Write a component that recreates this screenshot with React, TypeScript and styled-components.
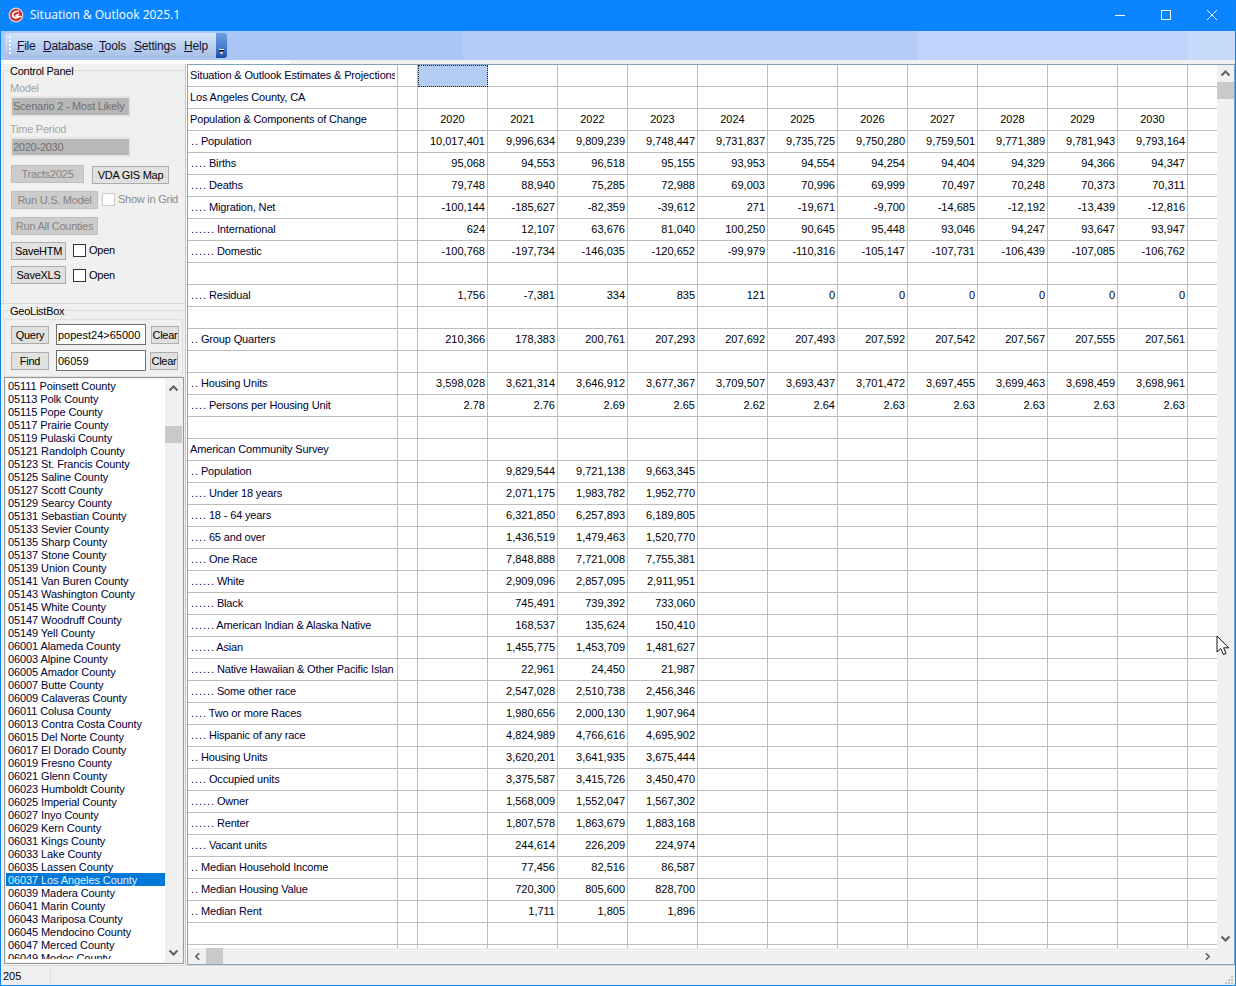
import React from "react";
import styled, { createGlobalStyle } from "styled-components";

const Global = createGlobalStyle`
  html, body { margin: 0; padding: 0; background: #f0f0f0; overflow: hidden; }
  * { box-sizing: border-box; }
`;

const FONT = `"Liberation Sans", Arial, sans-serif`;

const Win = styled.div`
  position: relative;
  width: 1236px;
  height: 986px;
  display: flex;
  flex-direction: column;
  background: #f0f0f0;
  border: 1px solid #0a84e8;
  border-top: 0;
  font: 11px/13px ${FONT};
  color: #000;
  overflow: hidden;
`;

const TitleBar = styled.div`
  height: 31px;
  margin: 0 -1px;
  padding-right: 1px;
  flex: none;
  background: #0a85ff;
  display: flex;
  align-items: center;
  color: #fff;
  font: 12px/16px "Open Sans", sans-serif;
`;
const AppIcon = styled.svg`
  width: 16px;
  height: 16px;
  margin: 0 6px 2px 8px;
`;
const Title = styled.div`
  flex: 1;
  margin-bottom: 1px;
`;
const WinBtn = styled.svg`
  width: 46px;
  height: 31px;
`;

const Band = styled.div`
  height: 29px;
  flex: none;
  display: flex;
  align-items: flex-start;
  padding: 2px 0 0 4px;
  background: linear-gradient(
    90deg,
    #a9c6f5 0,
    #a9c6f5 462px,
    #b5cdf6 462px,
    #b5cdf6 917px,
    #c0d3fa 917px,
    #c0d3fa 1187px,
    #c6daf9 1187px
  );
`;
const MenuBar = styled.div`
  height: 25px;
  width: 211px;
  border-radius: 4px 0 0 4px;
  background: linear-gradient(180deg, #d3e3fa 0, #bdd2f1 50%, #a5bee6 100%);
  display: flex;
  align-items: center;
  font: 12px/16px ${FONT};
  letter-spacing: -0.2px;
  position: relative;
`;
const Grip = styled.div`
  width: 2px;
  height: 20px;
  margin: 0 6px 0 4px;
  background: repeating-linear-gradient(180deg, #ffffff 0 2px, transparent 2px 4px);
`;
const MenuItem = styled.span<{ $w: number }>`
  width: ${(p) => p.$w}px;
  flex: none;
  color: #101030;
`;
const Mn = styled.span`
  text-decoration: underline;
`;
const Chevron = styled.div`
  width: 12px;
  height: 25px;
  margin-left: -1px;
  border-radius: 0 3px 3px 0;
  background: linear-gradient(180deg, #6f9de0 0, #4a7fd0 55%, #1a4ba8 100%);
  display: flex;
  align-items: flex-end;
  justify-content: center;
  padding-bottom: 2px;
`;
const Strip = styled.div`
  height: 4px;
  flex: none;
  background: linear-gradient(90deg, #ffffff 0, #ffffff 289px, #f0f0f0 289px);
`;

const Main = styled.div`
  flex: 1;
  min-height: 0;
  display: flex;
`;

const Left = styled.div`
  width: 185px;
  flex: none;
  display: flex;
  flex-direction: column;
  border-right: 1px solid #c4c4c4;
  letter-spacing: -0.25px;
`;
const ControlGroup = styled.div`
  height: 233px;
  margin: 6px 0 0 2px;
  border-top: 1px solid #dcdcdc;
  border-left: 1px solid #dcdcdc;
  padding: 0 0 0 6px;
`;
const Legend = styled.div`
  height: 14px;
  margin: -7px 0 0 0;
  width: fit-content;
  background: #f0f0f0;
  line-height: 14px;
`;
const DimLabel = styled.div<{ $top: number }>`
  height: 14px;
  margin-top: ${(p) => p.$top}px;
  line-height: 14px;
  color: #a3a3a3;
`;
const ReadOnly = styled.div<{ $h: number }>`
  width: 121px;
  height: ${(p) => p.$h}px;
  margin-top: 1px;
  border: 2px solid #e6e6e6;
  background: #b8b8b8;
  color: #6e6e6e;
  padding-left: 1px;
  display: flex;
  align-items: center;
  white-space: nowrap;
  overflow: hidden;
`;
const BtnRow = styled.div<{ $top: number }>`
  display: flex;
  align-items: flex-start;
  margin-top: ${(p) => p.$top}px;
  height: 18px;
`;
const Btn = styled.div<{ $w: number; $off?: boolean; $ml?: number; $mt?: number }>`
  width: ${(p) => p.$w}px;
  height: 18px;
  flex: none;
  margin-left: ${(p) => p.$ml ?? 0}px;
  margin-top: ${(p) => p.$mt ?? 0}px;
  border: 1px solid ${(p) => (p.$off ? "#bfbfbf" : "#adadad")};
  background: ${(p) => (p.$off ? "#cccccc" : "#e1e1e1")};
  color: ${(p) => (p.$off ? "#838383" : "#000")};
  display: flex;
  align-items: center;
  justify-content: center;
  white-space: nowrap;
`;
const Check = styled.div<{ $off?: boolean; $ml: number; $mt: number }>`
  width: 13px;
  height: 13px;
  flex: none;
  margin-left: ${(p) => p.$ml}px;
  margin-top: ${(p) => p.$mt}px;
  background: #fff;
  border: 1px solid ${(p) => (p.$off ? "#cccccc" : "#333333")};
`;
const CheckText = styled.span<{ $off?: boolean; $mt: number }>`
  margin-left: 3px;
  margin-top: ${(p) => p.$mt}px;
  color: ${(p) => (p.$off ? "#8a8a8a" : "#000")};
  white-space: nowrap;
`;

const GeoHead = styled.div`
  height: 9px;
  margin: 6px 0 0 2px;
  border-top: 1px solid #dcdcdc;
  border-left: 1px solid #dcdcdc;
  padding-left: 6px;
`;
const TopRule = styled.div`
  height: 1px;
  background: #d8d8d8;
`;
const QueryPanel = styled.div`
  height: 58px;
  margin: 0 2px 0 3px;
  border: 1px solid #dedede;
  padding: 4px 0 0 6px;
  display: flex;
  flex-direction: column;
  gap: 5px;
`;
const QueryRow = styled.div`
  display: flex;
  align-items: flex-start;
  height: 21px;
`;
const Input = styled.div`
  width: 90px;
  height: 21px;
  flex: none;
  margin-left: 7px;
  border: 1px solid #6f6f6f;
  background: #fff;
  padding-left: 1px;
  display: flex;
  align-items: center;
  white-space: nowrap;
  overflow: hidden;
  line-height: 14px;
  letter-spacing: 0;
`;
const ListBox = styled.div`
  flex: 1;
  min-height: 0;
  margin: 0 0 0 3px;
  width: 180px;
  border: 1px solid #9a9a9a;
  box-shadow: inset 0 0 0 1px #ededed;
  padding: 1px;
  display: flex;
  background: #fff;
  letter-spacing: -0.1px;
`;
const ListItems = styled.div`
  flex: 1;
  overflow: hidden;
  margin-bottom: 3px;
`;
const ListItem = styled.div<{ $sel?: boolean }>`
  height: 13px;
  line-height: 15px;
  padding-left: 2px;
  white-space: nowrap;
  color: ${(p) => (p.$sel ? "#dfeeff" : "#000033")};
  background: ${(p) => (p.$sel ? "#0078d7" : "transparent")};
`;
const VBar = styled.div<{ $w: number; $pb?: number }>`
  width: ${(p) => p.$w}px;
  flex: none;
  background: #f0f0f0;
  display: flex;
  flex-direction: column;
  align-items: center;
  padding-bottom: ${(p) => p.$pb ?? 0}px;
`;
const VThumb = styled.div<{ $top: number; $h: number }>`
  width: 100%;
  height: ${(p) => p.$h}px;
  margin-top: ${(p) => p.$top}px;
  flex: none;
  background: #c9c9c9;
`;
const Arrow = styled.svg<{ $mt?: number; $auto?: boolean; $mr?: number }>`
  width: 11px;
  height: 9px;
  flex: none;
  margin-top: ${(p) => p.$mt ?? 0}px;
  ${(p) => (p.$auto ? "margin-top: auto;" : "")}
  ${(p) => (p.$mr ? `margin-left: auto; margin-right: ${p.$mr}px;` : "")}
`;

const Gutter = styled.div`
  width: 1px;
  flex: none;
  background: #fbfbfb;
`;
const Frame = styled.div`
  width: 1048px;
  flex: none;
  height: 901px;
  border: 1px solid #7ea4c4;
  display: flex;
  flex-direction: column;
`;
const FrameTop = styled.div`
  display: flex;
  height: 883px;
  flex: none;
`;
const GridArea = styled.div`
  width: 1029px;
  flex: none;
  background: #fff;
  overflow: hidden;
`;
const Row = styled.div`
  display: grid;
  grid-template-columns: 210px 20px repeat(11, 70px) 29px;
  height: 22px;
`;
const Cell = styled.div<{ $kind?: "label" | "num" | "year"; $last?: boolean }>`
  height: 22px;
  min-width: 0;
  border-right: ${(p) => (p.$last ? "0" : "1px solid #bdbdbd")};
  border-bottom: 1px solid #bdbdbd;
  display: flex;
  align-items: center;
  overflow: hidden;
  white-space: nowrap;
  padding: 0 2px;
  color: ${(p) => (p.$kind === "label" ? "#000033" : "#000")};
  justify-content: ${(p) =>
    p.$kind === "num" ? "flex-end" : p.$kind === "year" ? "center" : "flex-start"};
`;
const Label = styled.span`
  display: block;
  width: 100%;
  overflow: hidden;
  letter-spacing: -0.15px;
`;
const Dots = styled.span`
  letter-spacing: 0.94px;
  margin: 0 -1px 0 1px;
`;
const ActiveCell = styled.div`
  height: 22px;
  width: 70px;
  border-bottom: 1px solid #bdbdbd;
  border-right: 1px solid #bdbdbd;
  background: #b3cdf5;
  outline: 1px dotted #222;
  outline-offset: -1px;
`;
const HBar = styled.div`
  height: 16px;
  flex: none;
  background: #f0f0f0;
  display: flex;
  align-items: center;
  padding-left: 4px;
`;
const HThumb = styled.div`
  width: 17px;
  height: 16px;
  margin-left: 3px;
  background: #c9c9c9;
`;
const Status = styled.div`
  height: 20px;
  flex: none;
  margin-top: 1px;
  border-top: 1px solid #dcdcdc;
  display: flex;
  align-items: center;
  position: relative;
`;
const StatusCell = styled.div`
  width: 50px;
  height: 18px;
  padding-left: 2px;
  border-right: 1px solid #dcdcdc;
  line-height: 18px;
`;
const ResizeGrip = styled.svg`
  position: absolute;
  right: 1px;
  bottom: 0;
  width: 10px;
  height: 10px;
`;
const Cursor = styled.svg`
  position: absolute;
  left: 1215px;
  top: 635px;
  width: 14px;
  height: 21px;
`;

const geo = `05111 Poinsett County|05113 Polk County|05115 Pope County|05117 Prairie County|05119 Pulaski County|05121 Randolph County|05123 St. Francis County|05125 Saline County|05127 Scott County|05129 Searcy County|05131 Sebastian County|05133 Sevier County|05135 Sharp County|05137 Stone County|05139 Union County|05141 Van Buren County|05143 Washington County|05145 White County|05147 Woodruff County|05149 Yell County|06001 Alameda County|06003 Alpine County|06005 Amador County|06007 Butte County|06009 Calaveras County|06011 Colusa County|06013 Contra Costa County|06015 Del Norte County|06017 El Dorado County|06019 Fresno County|06021 Glenn County|06023 Humboldt County|06025 Imperial County|06027 Inyo County|06029 Kern County|06031 Kings County|06033 Lake County|06035 Lassen County|06037 Los Angeles County|06039 Madera County|06041 Marin County|06043 Mariposa County|06045 Mendocino County|06047 Merced County|06049 Modoc County`.split("|");

const years = ["2020","2021","2022","2023","2024","2025","2026","2027","2028","2029","2030"];

type R = [string, string?];
const rows: R[] = [
  ["Situation & Outlook Estimates & Projections"],
  ["Los Angeles County, CA"],
  ["Population & Components of Change", "Y"],
  [".. Population", "10,017,401 9,996,634 9,809,239 9,748,447 9,731,837 9,735,725 9,750,280 9,759,501 9,771,389 9,781,943 9,793,164"],
  [".... Births", "95,068 94,553 96,518 95,155 93,953 94,554 94,254 94,404 94,329 94,366 94,347"],
  [".... Deaths", "79,748 88,940 75,285 72,988 69,003 70,996 69,999 70,497 70,248 70,373 70,311"],
  [".... Migration, Net", "-100,144 -185,627 -82,359 -39,612 271 -19,671 -9,700 -14,685 -12,192 -13,439 -12,816"],
  ["...... International", "624 12,107 63,676 81,040 100,250 90,645 95,448 93,046 94,247 93,647 93,947"],
  ["...... Domestic", "-100,768 -197,734 -146,035 -120,652 -99,979 -110,316 -105,147 -107,731 -106,439 -107,085 -106,762"],
  [""],
  [".... Residual", "1,756 -7,381 334 835 121 0 0 0 0 0 0"],
  [""],
  [".. Group Quarters", "210,366 178,383 200,761 207,293 207,692 207,493 207,592 207,542 207,567 207,555 207,561"],
  [""],
  [".. Housing Units", "3,598,028 3,621,314 3,646,912 3,677,367 3,709,507 3,693,437 3,701,472 3,697,455 3,699,463 3,698,459 3,698,961"],
  [".... Persons per Housing Unit", "2.78 2.76 2.69 2.65 2.62 2.64 2.63 2.63 2.63 2.63 2.63"],
  [""],
  ["American Community Survey"],
  [".. Population", "_ 9,829,544 9,721,138 9,663,345"],
  [".... Under 18 years", "_ 2,071,175 1,983,782 1,952,770"],
  [".... 18 - 64 years", "_ 6,321,850 6,257,893 6,189,805"],
  [".... 65 and over", "_ 1,436,519 1,479,463 1,520,770"],
  [".... One Race", "_ 7,848,888 7,721,008 7,755,381"],
  ["...... White", "_ 2,909,096 2,857,095 2,911,951"],
  ["...... Black", "_ 745,491 739,392 733,060"],
  ["...... American Indian & Alaska Native", "_ 168,537 135,624 150,410"],
  ["...... Asian", "_ 1,455,775 1,453,709 1,481,627"],
  ["...... Native Hawaiian & Other Pacific Islan", "_ 22,961 24,450 21,987"],
  ["...... Some other race", "_ 2,547,028 2,510,738 2,456,346"],
  [".... Two or more Races", "_ 1,980,656 2,000,130 1,907,964"],
  [".... Hispanic of any race", "_ 4,824,989 4,766,616 4,695,902"],
  [".. Housing Units", "_ 3,620,201 3,641,935 3,675,444"],
  [".... Occupied units", "_ 3,375,587 3,415,726 3,450,470"],
  ["...... Owner", "_ 1,568,009 1,552,047 1,567,302"],
  ["...... Renter", "_ 1,807,578 1,863,679 1,883,168"],
  [".... Vacant units", "_ 244,614 226,209 224,974"],
  [".. Median Household Income", "_ 77,456 82,516 86,587"],
  [".. Median Housing Value", "_ 720,300 805,600 828,700"],
  [".. Median Rent", "_ 1,711 1,805 1,896"],
  [""],
  [""],
];

const Up = ({ mt }: { mt?: number }) => (
  <Arrow viewBox="0 0 11 9" $mt={mt}>
    <path d="M1.5 6.5 5.5 2.5 9.5 6.5" fill="none" stroke="#606060" strokeWidth="2" />
  </Arrow>
);
const Down = () => (
  <Arrow viewBox="0 0 11 9" $auto>
    <path d="M1.5 2.5 5.5 6.5 9.5 2.5" fill="none" stroke="#606060" strokeWidth="2" />
  </Arrow>
);

const LabelText = ({ text }: { text: string }) => {
  const m = text.match(/^(\.+)( .*)$/);
  return m ? (
    <Label>
      <Dots>{m[1]}</Dots>
      {m[2]}
    </Label>
  ) : (
    <Label>{text}</Label>
  );
};

const DataRow = ({ r, i }: { r: R; i: number }) => {
  const vals = r[1] === "Y" ? years : r[1] ? r[1].split(" ").map((v) => (v === "_" ? "" : v)) : [];
  const isYear = r[1] === "Y";
  return (
    <Row>
      <Cell $kind="label">
        <LabelText text={r[0]} />
      </Cell>
      <Cell />
      {years.map((_, c) =>
        i === 0 && c === 0 ? (
          <ActiveCell key={c} />
        ) : (
          <Cell key={c} $kind={isYear ? "year" : "num"}>
            {vals[c] ?? ""}
          </Cell>
        )
      )}
      <Cell $last />
    </Row>
  );
};

export default function App() {
  return (
    <Win>
      <Global />
      <TitleBar>
        <AppIcon viewBox="0 0 16 16">
          <circle cx="8" cy="8" r="7.5" fill="#c9c9c9" />
          <circle cx="8" cy="8" r="6" fill="#dc2028" />
          <path d="M11 4.6C8.5 3.6 5 5 4.6 7.8 4.3 10 6.5 11.6 9 10.8L11.6 9.6 8 8.8 11 7" fill="none" stroke="#fff" strokeWidth="1.7" />
        </AppIcon>
        <Title>Situation &amp; Outlook 2025.1</Title>
        <WinBtn viewBox="0 0 46 31">
          <path d="M18 15.5H28" stroke="#fff" strokeWidth="1" />
        </WinBtn>
        <WinBtn viewBox="0 0 46 31">
          <rect x="18.5" y="10.5" width="9" height="9" fill="none" stroke="#fff" strokeWidth="1" />
        </WinBtn>
        <WinBtn viewBox="0 0 46 31">
          <path d="M18 10 28 20M28 10 18 20" stroke="#fff" strokeWidth="1" />
        </WinBtn>
      </TitleBar>
      <Band>
        <MenuBar>
          <Grip />
          <MenuItem $w={26}><Mn>F</Mn>ile</MenuItem>
          <MenuItem $w={56}><Mn>D</Mn>atabase</MenuItem>
          <MenuItem $w={35}><Mn>T</Mn>ools</MenuItem>
          <MenuItem $w={50}><Mn>S</Mn>ettings</MenuItem>
          <MenuItem $w={28}><Mn>H</Mn>elp</MenuItem>
        </MenuBar>
        <Chevron>
          <svg width="7" height="7" viewBox="0 0 7 7">
            <rect x="1" y="0" width="5" height="1" fill="#fff" />
            <rect x="1" y="1" width="5" height="1" fill="#000" />
            <path d="M1 3H6L3.5 6Z" fill="#fff" stroke="#000" strokeWidth=".4" />
          </svg>
        </Chevron>
      </Band>
      <Strip />
      <Main>
        <Left>
          <ControlGroup>
            <Legend>Control Panel</Legend>
            <DimLabel $top={3}>Model</DimLabel>
            <ReadOnly $h={21}>Scenario 2 - Most Likely</ReadOnly>
            <DimLabel $top={5}>Time Period</DimLabel>
            <ReadOnly $h={20}>2020-2030</ReadOnly>
            <BtnRow $top={8}>
              <Btn $w={73} $off $ml={1}>Tracts2025</Btn>
              <Btn $w={77} $ml={8} $mt={1}>VDA GIS Map</Btn>
            </BtnRow>
            <BtnRow $top={8}>
              <Btn $w={87} $off $ml={1}>Run U.S. Model</Btn>
              <Check $off $ml={4} $mt={2} />
              <CheckText $off $mt={2}>Show in Grid</CheckText>
            </BtnRow>
            <BtnRow $top={8}>
              <Btn $w={87} $off $ml={1}>Run All Counties</Btn>
            </BtnRow>
            <BtnRow $top={7}>
              <Btn $w={55} $ml={1}>SaveHTM</Btn>
              <Check $ml={7} $mt={2} />
              <CheckText $mt={2}>Open</CheckText>
            </BtnRow>
            <BtnRow $top={6}>
              <Btn $w={55} $ml={1}>SaveXLS</Btn>
              <Check $ml={7} $mt={3} />
              <CheckText $mt={3}>Open</CheckText>
            </BtnRow>
          </ControlGroup>
          <TopRule />
          <GeoHead>
            <Legend>GeoListBox</Legend>
          </GeoHead>
          <QueryPanel>
            <QueryRow>
              <Btn $w={38} $mt={2}>Query</Btn>
              <Input>popest24&gt;65000</Input>
              <Btn $w={28} $ml={5} $mt={2}>Clear</Btn>
            </QueryRow>
            <QueryRow>
              <Btn $w={38} $mt={2}>Find</Btn>
              <Input>06059</Input>
              <Btn $w={28} $ml={4} $mt={2}>Clear</Btn>
            </QueryRow>
          </QueryPanel>
          <ListBox>
            <ListItems>
              {geo.map((g) => (
                <ListItem key={g} $sel={g.startsWith("06037")}>{g}</ListItem>
              ))}
            </ListItems>
            <VBar $w={17} $pb={5}>
              <Up mt={5} />
              <VThumb $top={33} $h={17} />
              <Down />
            </VBar>
          </ListBox>
        </Left>
        <Gutter />
        <Frame>
          <FrameTop>
            <GridArea>
              {rows.map((r, i) => (
                <DataRow key={i} r={r} i={i} />
              ))}
            </GridArea>
            <VBar $w={17} $pb={5}>
              <Up mt={4} />
              <VThumb $top={4} $h={17} />
              <Down />
            </VBar>
          </FrameTop>
          <HBar>
            <Arrow viewBox="0 0 9 11">
              <path d="M6.5 1.5 2.5 5.5 6.5 9.5" fill="none" stroke="#606060" strokeWidth="2" />
            </Arrow>
            <HThumb />
            <Arrow viewBox="0 0 9 11" $mr={21}>
              <path d="M2.5 1.5 6.5 5.5 2.5 9.5" fill="none" stroke="#606060" strokeWidth="2" />
            </Arrow>
          </HBar>
        </Frame>
      </Main>
      <Status>
        <StatusCell>205</StatusCell>
        <ResizeGrip viewBox="0 0 10 10">
          <g fill="#c4c4c4">
            <rect x="7" y="1" width="2" height="2" />
            <rect x="4" y="4" width="2" height="2" />
            <rect x="7" y="4" width="2" height="2" />
            <rect x="1" y="7" width="2" height="2" />
            <rect x="4" y="7" width="2" height="2" />
            <rect x="7" y="7" width="2" height="2" />
          </g>
        </ResizeGrip>
      </Status>
      <Cursor viewBox="0 0 14 21">
        <path d="M1 1V17L4.8 13.6 7.4 19.6 10 18.4 7.6 12.8H12.6Z" fill="#fff" stroke="#14141e" strokeWidth="1" />
      </Cursor>
    </Win>
  );
}
